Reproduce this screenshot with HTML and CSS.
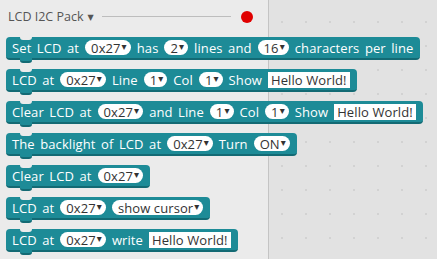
FILE: index.html
```html
<!DOCTYPE html>
<html lang="en">
<head>
    <meta charset="UTF-8">
    <title>LCD I2C Pack</title>
    <link rel="stylesheet" href="styles.css">
</head>
<body>

<div class="workspace">
    <div class="flyout">
        <div class="category">
            <span class="category-name">LCD I2C Pack</span>
            <span class="category-arrow">&#9660;</span>
            <span class="category-line"></span>
            <span class="category-dot"></span>
        </div>

        <div class="block">
            <span>Set LCD at</span>
            <span class="dropdown">0x27</span>
            <span>has</span>
            <span class="dropdown">2</span>
            <span>lines and</span>
            <span class="dropdown">16</span>
            <span>characters per line</span>
        </div>

        <div class="block">
            <span>LCD at</span>
            <span class="dropdown">0x27</span>
            <span>Line</span>
            <span class="dropdown">1</span>
            <span>Col</span>
            <span class="dropdown">1</span>
            <span>Show</span>
            <span class="text-field">Hello World!</span>
        </div>

        <div class="block">
            <span>Clear LCD at</span>
            <span class="dropdown">0x27</span>
            <span>and Line</span>
            <span class="dropdown">1</span>
            <span>Col</span>
            <span class="dropdown">1</span>
            <span>Show</span>
            <span class="text-field">Hello World!</span>
        </div>

        <div class="block">
            <span>The backlight of LCD at</span>
            <span class="dropdown">0x27</span>
            <span>Turn</span>
            <span class="dropdown">ON</span>
        </div>

        <div class="block">
            <span>Clear LCD at</span>
            <span class="dropdown">0x27</span>
        </div>

        <div class="block">
            <span>LCD at</span>
            <span class="dropdown">0x27</span>
            <span class="dropdown">show cursor</span>
        </div>

        <div class="block">
            <span>LCD at</span>
            <span class="dropdown">0x27</span>
            <span>write</span>
            <span class="text-field">Hello World!</span>
        </div>
    </div>
</div>

</body>
</html>
```

FILE: styles.css
```css
body {
    margin: 0;
    font-family: 'Open Sans', 'DejaVu Sans', sans-serif;
}

.workspace {
    height: 100vh;
    background-color: #e2e2e2;
    background-image: radial-gradient(circle, #d2d2d2 1px, transparent 1.2px);
    background-size: 24px 24px;
    background-position: 6px 10px;
    overflow: hidden;
}

.flyout {
    width: 269px;
    height: 100%;
    box-sizing: border-box;
    padding: 8px 0 0 6px;
    background-color: #ebebeb;
    border-right: 1px solid #c4c4c4;
}

.category {
    display: flex;
    align-items: center;
    height: 17px;
    margin: 0 0 12px 2px;
    color: #555;
    font-size: 12.5px;
}

.category-arrow {
    font-size: 8px;
    margin-left: 4px;
}

.category-line {
    width: 129px;
    height: 1px;
    margin-left: 8px;
    background-color: #bdbdbd;
}

.category-dot {
    width: 12px;
    height: 12px;
    margin-left: 10px;
    border-radius: 50%;
    background-color: #e00000;
}

.block {
    position: relative;
    display: flex;
    align-items: center;
    gap: 6px;
    width: max-content;
    height: 21px;
    margin-bottom: 9px;
    padding: 0 7px 0 6px;
    background-color: #1d8b97;
    border-bottom: 2px solid #136a74;
    border-radius: 4px;
    color: #fff;
    font-size: 13px;
    word-spacing: 2px;
    letter-spacing: 0.1px;
    white-space: nowrap;
}

/* notch on top, tab below */
.block::before {
    content: "";
    position: absolute;
    left: 14px;
    top: 0;
    width: 12px;
    height: 3px;
    background-color: #ebebeb;
    border-radius: 0 0 3px 3px;
}

.block::after {
    content: "";
    position: absolute;
    left: 14px;
    bottom: -5px;
    width: 12px;
    height: 3px;
    background-color: #1d8b97;
    border-bottom: 2px solid #136a74;
    border-radius: 0 0 3px 3px;
}

.dropdown {
    display: inline-flex;
    align-items: center;
    height: 15px;
    padding: 0 4px 0 6px;
    background-color: #fff;
    border-radius: 8px;
    color: #333;
    word-spacing: 0;
}

.dropdown::after {
    content: "\25BE";
    font-size: 10px;
    margin-left: 1px;
    margin-top: -4px;
}

.text-field {
    display: inline-flex;
    align-items: center;
    height: 16px;
    padding: 0 3px;
    background-color: #fff;
    color: #333;
    word-spacing: 0;
}
```
